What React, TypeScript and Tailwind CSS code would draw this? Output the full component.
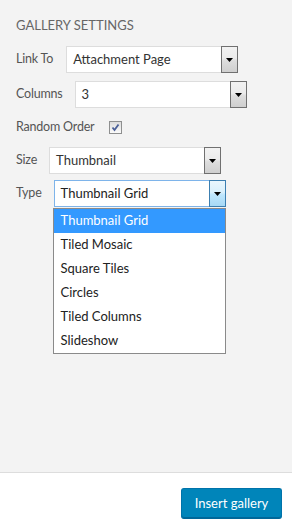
import React from "react"

const FONT = "font-['Lato','Open_Sans',sans-serif]"

function Arrow() {
  return (
    <svg width="7" height="4" viewBox="0 0 7 4" className="block">
      <polygon points="0,0 7,0 3.5,4" fill="#000" />
    </svg>
  )
}

function SelectBox({ value, active = false }: { value: string; active?: boolean }) {
  return (
    <div className="flex h-[27px] w-[172px]">
      <div
        className={
          active
            ? "flex flex-1 items-center border-y border-l border-[#7eb4ea] bg-white pl-[6px] text-[13px] text-[#222]"
            : "flex flex-1 items-center border-y border-l border-[#dddddd] bg-white pl-[6px] text-[13px] text-[#333]"
        }
      >
        {value}
      </div>
      <div
        className={
          active
            ? "flex w-[17px] items-center justify-center border border-[#3c7fb1] bg-[linear-gradient(#eaf6fd_0%,#d9f0fc_45%,#bee6fd_55%,#a7d9f5_100%)]"
            : "flex w-[17px] items-center justify-center border border-[#707070] bg-[linear-gradient(#f2f2f2_0%,#ebebeb_45%,#dddddd_55%,#cfcfcf_100%)]"
        }
      >
        <Arrow />
      </div>
    </div>
  )
}

function Row({ label, gap, children }: { label: string; gap: string; children: React.ReactNode }) {
  return (
    <div className={`flex items-center ${gap}`}>
      <span className="text-[12.5px] tracking-[-0.2px] text-[#555]">{label}</span>
      {children}
    </div>
  )
}

const typeOptions = ["Thumbnail Grid", "Tiled Mosaic", "Square Tiles", "Circles", "Tiled Columns", "Slideshow"]

export default function App() {
  return (
    <div className={`flex h-[528px] w-[292px] flex-col bg-[#f3f3f3] ${FONT}`}>
      <div className="flex-1 px-[16px] pt-[17px]">
        <h2 className="h-[16px] text-[13px] leading-[16px] text-[#666] uppercase">Gallery Settings</h2>

        <div className="mt-[13px]">
          <Row label="Link To" gap="gap-[13px]">
            <SelectBox value="Attachment Page" />
          </Row>
        </div>

        <div className="mt-[8px]">
          <Row label="Columns" gap="gap-[12px]">
            <SelectBox value="3" />
          </Row>
        </div>

        <div className="flex h-[39px] items-center gap-[15px]">
          <span className="text-[12.5px] tracking-[-0.2px] text-[#555]">Random Order</span>
          <span className="flex h-[13px] w-[13px] items-center justify-center border border-[#8e8f8f] bg-[linear-gradient(#dcdcdc,#fbfbfb)]">
            <svg width="9" height="9" viewBox="0 0 9 9">
              <path d="M1.5 4.5 L3.5 7 L7.5 1.5" fill="none" stroke="#4a5f97" strokeWidth="1.8" />
            </svg>
          </span>
        </div>

        <Row label="Size" gap="gap-[12px]">
          <SelectBox value="Thumbnail" />
        </Row>

        <div className="mt-[6px]">
          <Row label="Type" gap="gap-[12px]">
            <div className="relative">
              <SelectBox value="Thumbnail Grid" active />
              <ul className="absolute top-[28px] left-[-1px] w-[173px] border border-[#8a8a8a] bg-white text-[13px] text-[#222]">
                {typeOptions.map((opt, i) => (
                  <li
                    key={opt}
                    className={
                      i === 0
                        ? "flex h-[24px] items-center bg-[#3399ff] pl-[7px] text-white"
                        : "flex h-[24px] items-center pl-[7px]"
                    }
                  >
                    {opt}
                  </li>
                ))}
              </ul>
            </div>
          </Row>
        </div>
      </div>

      <div className="flex h-[56px] justify-end border-t border-[#dddddd] bg-white pt-[15px] pr-[10px]">
        <button className="h-[31px] w-[101px] rounded-[3px] border border-[#0073aa] border-b-[#006799] bg-[#0085ba] text-[13px] text-white shadow-[inset_0_-1px_0_#006799]">
          Insert gallery
        </button>
      </div>
    </div>
  )
}
